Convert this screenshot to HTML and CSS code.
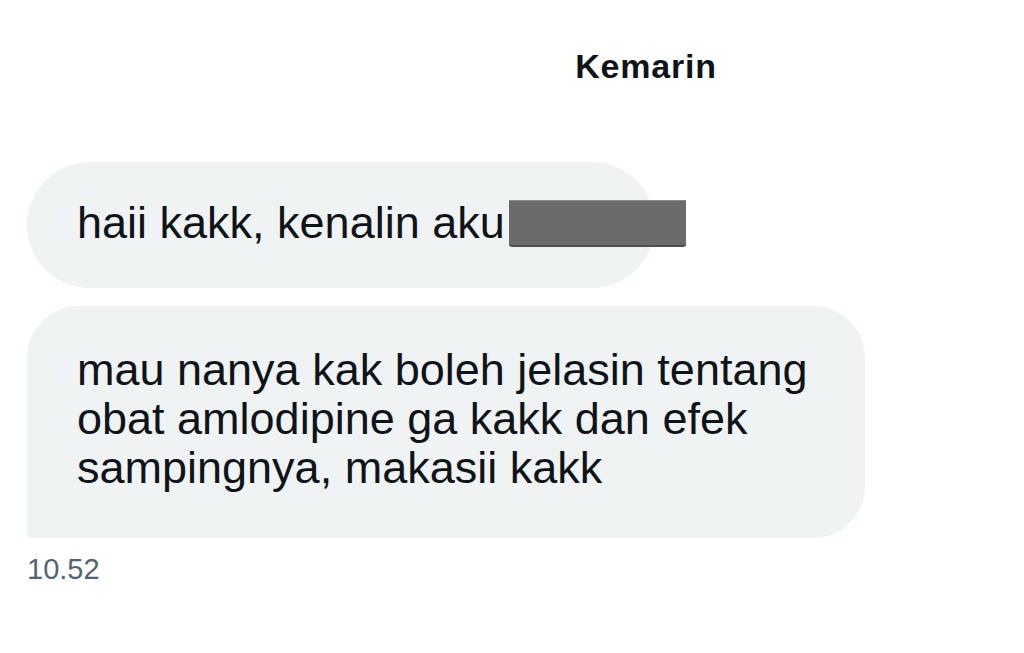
FILE: index.html
```html
<!DOCTYPE html>
<html lang="id">
  <head>
    <meta charset="UTF-8" />
    <meta name="viewport" content="width=device-width, initial-scale=1.0" />
    <title>Pesan</title>
    <link rel="stylesheet" href="styles.css">
  </head>
  <body>
    <div class="chat">
      <!-- tanggal -->
      <div class="day-label">Kemarin</div>

      <!-- pesan masuk -->
      <div class="bubble bubble-first">
        haii kakk, kenalin aku<span class="redacted"></span>
      </div>
      <div class="bubble bubble-last">
        mau nanya kak boleh jelasin tentang obat amlodipine ga kakk dan efek sampingnya, makasii kakk
      </div>
      <div class="time">10.52</div>
    </div>
  </body>
</html>
```

FILE: styles.css
```css
body {
  margin: 0;
  background-color: #fff;
  font-family: "Liberation Sans", Arial, sans-serif;
  color: #0f1419;
}

.chat {
  padding: 46px 0 0 27px;
}

.day-label {
  padding-left: 241px;
  text-align: center;
  font-size: 34px;
  font-weight: bold;
  letter-spacing: 0.8px;
  line-height: 40px;
}

.bubble {
  box-sizing: border-box;
  background-color: #eff3f4;
  font-size: 45px;
  line-height: 49px;
  padding-left: 50px;
  padding-right: 40px;
}

.bubble-first {
  margin-top: 76px;
  width: 628px;
  padding-top: 36px;
  padding-bottom: 41px;
  border-radius: 63px;
  white-space: nowrap;
}

.bubble-last {
  margin-top: 18px;
  width: 838px;
  padding-top: 39px;
  padding-bottom: 46px;
  border-radius: 52px 52px 52px 5px;
}

.redacted {
  display: inline-block;
  width: 177px;
  height: 44px;
  margin-left: 4px;
  vertical-align: -9px;
  background-color: #6b6b6b;
  border-top: 1px solid #8a8a8a;
  border-bottom: 2px solid #4e4e52;
  border-radius: 0 0 3px 3px;
}

.time {
  margin-top: 14px;
  font-size: 29px;
  line-height: 34px;
  color: #536471;
}
```
